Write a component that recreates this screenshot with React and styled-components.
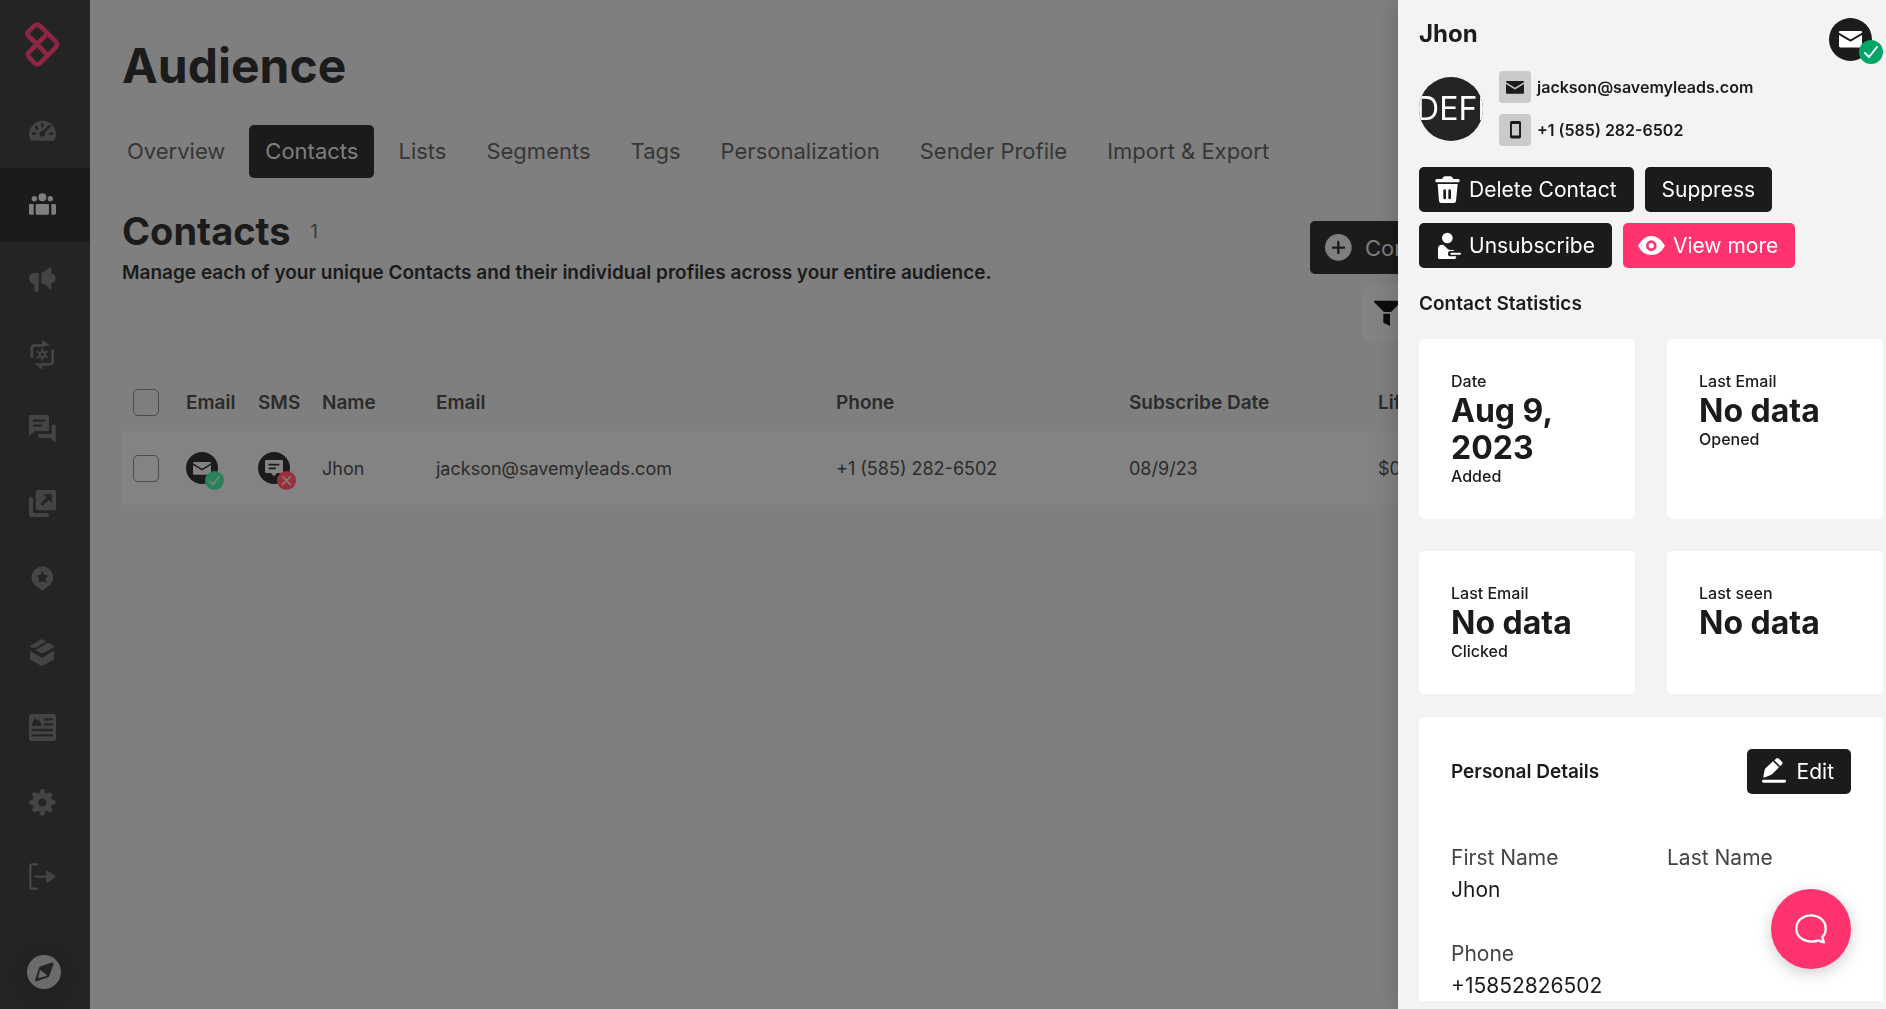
import styled, { createGlobalStyle } from "styled-components";

const GaugeIcon = () => (
  <svg viewBox="0 0 81 81">
    <path d="M7 71C0 64-1 55 1 45A40 40 0 0 1 80 45C82 55 81 64 74 71Z" />
    <g className="cut" strokeWidth="8">
      <path d="M12 50h6M63 50h6M21 30l3 4M40 23v4M40 50L61 27" />
      <circle className="cutFill" cx="40" cy="51" r="8" />
    </g>
  </svg>
);

const PeopleIcon = () => (
  <svg viewBox="0 0 81 81">
    <circle cx="40" cy="19" r="12" />
    <circle cx="16" cy="23" r="8" />
    <circle cx="64" cy="23" r="8" />
    <rect x="20" y="39" width="40" height="32" rx="4" />
    <path d="M4 39h10v32H4q-4 0-4-4V43q0-4 4-4zM67 39h10q4 0 4 4v24q0 4-4 4H67z" />
  </svg>
);

const MegaphoneIcon = () => (
  <svg viewBox="0 0 81 81">
    <path d="M14 21h15v53q0 3-3 3h-7q-3 0-3-3V54Q0 52 0 37Q1 22 14 21zM37 21Q52 16 62 4h5v19q13 2 13 14t-13 14v19h-5Q52 56 37 52z" />
  </svg>
);

const LoopIcon = () => (
  <svg viewBox="0 0 81 81">
    <path
      className="line"
      strokeWidth="8"
      d="M8 47V23q0-10 10-10h26M71 29v31q0 10-10 10H40"
    />
    <path d="M39-2q14 5 25 16H39zM16 67h24v19Q28 78 16 67z" />
    <g className="line" strokeWidth="6">
      <circle cx="40" cy="40" r="8" />
      <path d="M40 24v6M40 50v6M26 32l6 4M48 45l6 4M54 32l-6 4M32 45l-6 4" />
    </g>
  </svg>
);

const ChatsIcon = () => (
  <svg viewBox="0 0 81 81">
    <path d="M4 0h52q4 0 4 4v40q0 4-4 4H18L4 61q-4 2-4-3V4q0-4 4-4zM68 29h8q4 0 4 4v44q0 5-4 3L64 69H32q-4 0-4-4v-8h36q4 0 4-4z" />
    <path className="cut" strokeWidth="7" d="M15 17h30M15 32h21" />
  </svg>
);

const ShareIcon = () => (
  <svg viewBox="0 0 81 81">
    <rect x="20" width="61" height="61" rx="6" />
    <path
      className="line"
      strokeWidth="12"
      strokeLinecap="butt"
      d="M6 26v45q0 4 4 4h44"
    />
    <path className="cut" strokeWidth="9" d="M40 42L56 26" />
    <path className="cutFill" d="M44 13h24v25z" />
  </svg>
);

const PinIcon = () => (
  <svg viewBox="0 0 81 81">
    <path d="M40 4A33 33 0 0 1 51 68L43 75q-3 2-6 0L29 68A33 33 0 0 1 40 4z" />
    <path
      className="cutFill"
      d="M40 18l6 12 12 2-9 9 3 13-12-6-12 6 3-13-9-9 12-2z"
    />
  </svg>
);

const BoxIcon = () => (
  <svg viewBox="0 0 81 81">
    <path d="M3 21L34 2q4-2 8 0l9 6L17 28H14L4 24zM19 34L54 13q4-2 8 0l13 9v3L43 42q-4 2-7 0zM3 35L35 54q4 2 8 0L75 35v26L42 80q-3 2-6 0L3 61z" />
  </svg>
);

const NewsIcon = () => (
  <svg viewBox="0 0 81 81">
    <rect width="81" height="81" rx="7" />
    <path
      className="cutFill"
      d="M8 36q3-13 10-24 3 1 6 8l4-3q6 4 10 19z"
    />
    <path
      className="cut"
      strokeWidth="7"
      d="M47 16h22M47 31h22M11 48h58M11 64h58"
    />
  </svg>
);

const GearIcon = () => (
  <svg viewBox="0 0 81 81">
    <circle className="line" cx="40" cy="40" r="21" strokeWidth="17" />
    <path
      className="line"
      strokeWidth="16"
      d="M40 8v10M40 62v10M8 40h10M62 40h10M18 18l8 8M54 54l8 8M62 18l-8 8M26 54l-8 8"
    />
  </svg>
);

const ExitIcon = () => (
  <svg viewBox="0 0 81 81">
    <path
      className="line"
      strokeWidth="7"
      d="M24 4H10q-6 0-6 6v61q0 6 6 6h14M20 41h36"
    />
    <path d="M52 21l26 17q4 3 0 6L52 61z" />
  </svg>
);

const CompassIcon = () => (
  <svg viewBox="0 0 100 100">
    <circle cx="50" cy="50" r="50" />
    <path
      className="cutFill"
      d="M36 37q2-4 6-5l32-10q5-1 4 4L66 61q-1 4-5 5L28 77q-5 1-4-5z"
    />
    <path d="M38 45q1-1 2 0l18 14q1 2-1 3l-22 6q-2 0-2-2z" />
  </svg>
);

const LogoIcon = () => (
  <svg viewBox="0 0 105 134" fill="none" strokeWidth="14">
    <path d="M37 67L13 44Q3 35 12 26L27 12Q37 3 46 12L91 57Q101 67 91 77L47 121Q37 131 28 122L13 106Q4 97 14 88L67 35M37 67L67 98" />
  </svg>
);

const EnvelopeIcon = () => (
  <svg viewBox="0 0 70 50">
    <path d="M3 0h64q3 0 3 3v2L35 26 0 5V3q0-3 3-3zM0 12l35 21 35-21v34q0 4-4 4H4q-4 0-4-4z" />
  </svg>
);

const SmsIcon = () => (
  <svg viewBox="0 0 54 50">
    <path d="M3 0h48q3 0 3 3v33q0 3-3 3H36l-9 10-9-10H3q-3 0-3-3V3q0-3 3-3z" />
    <path className="cut" strokeWidth="5" d="M13 14h28M13 25h18" />
  </svg>
);

const PhoneIcon = () => (
  <svg viewBox="0 0 34 54">
    <path
      fillRule="evenodd"
      d="M5 0h24q5 0 5 5v44q0 5-5 5H5q-5 0-5-5V5q0-5 5-5zM6 9v36h22V9z"
    />
  </svg>
);

const CheckIcon = () => (
  <svg viewBox="0 0 24 24">
    <path className="line" strokeWidth="2" d="M6 13l4 4 8-10" />
  </svg>
);

const CrossIcon = () => (
  <svg viewBox="0 0 24 24">
    <path className="line" strokeWidth="2" d="M7 7l10 10M17 7L7 17" />
  </svg>
);

const TrashIcon = () => (
  <svg viewBox="0 0 81 81">
    <path d="M8 9h16l4-6q2-2 5-2h16q3 0 5 2l4 6h15q4 0 4 5t-4 5H8q-4 0-4-5t4-5z" />
    <path
      fillRule="evenodd"
      d="M11 24h60l-5 52q-1 5-6 5H21q-5 0-6-5zM32 40q-4 0-4 4v22q0 4 4 4t4-4V44q0-4-4-4zM47 40q-4 0-4 4v22q0 4 4 4t4-4V44q0-4-4-4z"
    />
  </svg>
);

const PersonIcon = () => (
  <svg viewBox="0 0 81 81">
    <circle cx="40" cy="18" r="16" />
    <path d="M12 50q0-13 16-12l14 14q5 3 13 1l7 4H49q-7 0-7 8t8 8h17l-3 8H16q-4 0-4-4z" />
    <path className="line" strokeWidth="6" d="M52 65h26" />
  </svg>
);

const EyeIcon = () => (
  <svg viewBox="0 0 81 81">
    <path
      fillRule="evenodd"
      d="M0 41Q16 12 40 12T81 41Q66 69 40 69T0 41zM40 25a16 16 0 1 0 0 32a16 16 0 1 0 0-32z"
    />
    <circle cx="40" cy="41" r="8" />
  </svg>
);

const PencilIcon = () => (
  <svg viewBox="0 0 81 81">
    <path d="M4 56L8 36q1-4 4-7L33 10l18 18-20 20q-3 3-7 4L6 59zM37 7l5-5q4-4 9 0l9 9q4 4 0 8l-5 6z" />
    <rect y="65" width="72" height="9" rx="4" />
  </svg>
);

const PlusCircleIcon = () => (
  <svg viewBox="0 0 81 81">
    <circle cx="40" cy="40" r="40" />
    <path className="cut" strokeWidth="7" d="M40 24v33M24 41h33" />
  </svg>
);

const FunnelIcon = () => (
  <svg viewBox="0 0 81 81">
    <path d="M0 2h81v4L51 36H30L0 6zM28 41h20v37L28 68z" />
  </svg>
);

const BubbleIcon = () => (
  <svg viewBox="0 0 97 90" fill="none" strokeWidth="7">
    <path
      strokeLinejoin="round"
      d="M48 4C72 4 93 20 93 44C93 56 87 66 83 69Q84 78 88 86Q78 85 72 80C42 90 4 78 4 44C4 20 25 4 48 4z"
    />
  </svg>
);

const navItems = [
  { label: "Dashboard", Icon: GaugeIcon },
  { label: "Audience", Icon: PeopleIcon, active: true },
  { label: "Campaigns", Icon: MegaphoneIcon },
  { label: "Automation", Icon: LoopIcon },
  { label: "Conversations", Icon: ChatsIcon },
  { label: "Pop-ups", Icon: ShareIcon },
  { label: "Reviews", Icon: PinIcon },
  { label: "Products", Icon: BoxIcon },
  { label: "Content", Icon: NewsIcon },
  { label: "Settings", Icon: GearIcon },
  { label: "Log out", Icon: ExitIcon },
];

const tabs = [
  "Overview",
  "Contacts",
  "Lists",
  "Segments",
  "Tags",
  "Personalization",
  "Sender Profile",
  "Import & Export",
];

const stats = [
  { top: "Date", value: "Aug 9, 2023", bottom: "Added" },
  { top: "Last Email", value: "No data", bottom: "Opened" },
  { top: "Last Email", value: "No data", bottom: "Clicked" },
  { top: "Last seen", value: "No data" },
];

const details = [
  { term: "First Name", value: "Jhon" },
  { term: "Last Name", value: "" },
  { term: "Phone", value: "+15852826502" },
];

const App = () => {
  return (
    <>
      <GlobalStyle />
      <Layout>
        <Sidebar>
          <Logo href="#home" aria-label="Home">
            <LogoIcon />
          </Logo>
          <NavList>
            {navItems.map(({ label, Icon, active }) => (
              <NavItem key={label} href="#" aria-label={label} $active={active}>
                <Icon />
              </NavItem>
            ))}
          </NavList>
          <CompassButton aria-label="Guide">
            <CompassIcon />
          </CompassButton>
        </Sidebar>

        <Main>
          <h1>Audience</h1>
          <Tabs>
            {tabs.map((tab) => (
              <Tab key={tab} href="#" $active={tab === "Contacts"}>
                {tab}
              </Tab>
            ))}
          </Tabs>

          <SectionHead>
            <div>
              <SectionTitle>
                <h2>Contacts</h2>
                <span>1</span>
              </SectionTitle>
              <p>
                Manage each of your unique Contacts and their individual
                profiles across your entire audience.
              </p>
            </div>
            <AddButton>
              <PlusCircleIcon />
              Contact
            </AddButton>
          </SectionHead>

          <Filters>
            <FilterButton aria-label="Filter">
              <FunnelIcon />
            </FilterButton>
          </Filters>

          <Table>
            <colgroup>
              <col className="check" />
              <col className="email" />
              <col className="sms" />
              <col className="name" />
              <col className="address" />
              <col className="phone" />
              <col className="date" />
              <col />
            </colgroup>
            <thead>
              <tr>
                <th>
                  <Checkbox aria-label="Select all" />
                </th>
                <th>Email</th>
                <th>SMS</th>
                <th>Name</th>
                <th>Email</th>
                <th>Phone</th>
                <th>Subscribe Date</th>
                <th>Lifetime</th>
              </tr>
            </thead>
            <tbody>
              <tr>
                <td>
                  <Checkbox aria-label="Select Jhon" />
                </td>
                <td>
                  <Channel>
                    <EnvelopeIcon />
                    <Badge $color="#2a8059">
                      <CheckIcon />
                    </Badge>
                  </Channel>
                </td>
                <td>
                  <Channel>
                    <SmsIcon />
                    <Badge $color="#99303a">
                      <CrossIcon />
                    </Badge>
                  </Channel>
                </td>
                <td>Jhon</td>
                <td>jackson@savemyleads.com</td>
                <td>+1 (585) 282-6502</td>
                <td>08/9/23</td>
                <td>$0.00</td>
              </tr>
            </tbody>
          </Table>
        </Main>
      </Layout>

      <Panel>
        <PanelBody>
          <PanelHead>
            <h3>Jhon</h3>
            <Channel $large>
              <EnvelopeIcon />
              <Badge $large $color="#00a567">
                <CheckIcon />
              </Badge>
            </Channel>
          </PanelHead>

          <Profile>
            <Avatar>DEFI</Avatar>
            <ContactList>
              <li>
                <Chip>
                  <EnvelopeIcon />
                </Chip>
                jackson@savemyleads.com
              </li>
              <li>
                <Chip $narrow>
                  <PhoneIcon />
                </Chip>
                +1 (585) 282-6502
              </li>
            </ContactList>
          </Profile>

          <Actions>
            <Button $icon>
              <TrashIcon />
              Delete Contact
            </Button>
            <Button>Suppress</Button>
            <Button $icon>
              <PersonIcon />
              Unsubscribe
            </Button>
            <Button $icon $pink>
              <EyeIcon />
              View more
            </Button>
          </Actions>

          <h4>Contact Statistics</h4>
          <StatGrid>
            {stats.map(({ top, value, bottom }) => (
              <StatCard key={top + bottom}>
                <span>{top}</span>
                <strong>{value}</strong>
                {bottom && <span>{bottom}</span>}
              </StatCard>
            ))}
          </StatGrid>

          <DetailsCard>
            <header>
              <h4>Personal Details</h4>
              <Button $icon>
                <PencilIcon />
                Edit
              </Button>
            </header>
            <dl>
              {details.map(({ term, value }) => (
                <div key={term}>
                  <dt>{term}</dt>
                  <dd>{value}</dd>
                </div>
              ))}
            </dl>
          </DetailsCard>
        </PanelBody>
      </Panel>

      <ChatButton aria-label="Open chat">
        <BubbleIcon />
      </ChatButton>
    </>
  );
};

const GlobalStyle = createGlobalStyle`
  * {
    box-sizing: border-box;
    margin: 0;
    padding: 0;
  }

  body {
    background-color: #7f7f7f;
    color: #1b1b1b;
    font-family: Inter, "Liberation Sans", sans-serif;
    overflow: hidden;
  }

  a {
    text-decoration: none;
  }

  button {
    border: none;
    font-family: inherit;
    cursor: pointer;
  }

  svg {
    display: block;
    flex-shrink: 0;
    fill: currentColor;
    overflow: visible;
  }

  svg .line,
  svg .cut {
    fill: none;
    stroke: currentColor;
    stroke-linecap: round;
    stroke-linejoin: round;
  }

  svg .cut {
    stroke: var(--cut);
  }

  svg .cutFill {
    fill: var(--cut);
    stroke: none;
  }
`;

const Layout = styled.div`
  display: flex;
  height: 100vh;
`;

const Sidebar = styled.aside`
  --cut: #242424;
  display: flex;
  flex-direction: column;
  flex-shrink: 0;
  width: 90px;
  background-color: #242424;
`;

const Logo = styled.a`
  height: 93px;
  padding: 22px 25px;

  & svg {
    width: 35px;
    height: 45px;
    fill: none;
    stroke: #8c2643;
  }
`;

const NavList = styled.nav`
  display: flex;
  flex-direction: column;
  height: 821px;
`;

const NavItem = styled.a`
  display: flex;
  flex: 1;
  align-items: center;
  padding-left: 29px;
  color: ${({ $active }) => ($active ? "#7f7f7f" : "#444444")};
  background-color: ${({ $active }) => ($active ? "#1b1b1b" : "transparent")};

  & svg {
    width: 27px;
    height: 27px;
  }
`;

const CompassButton = styled.button`
  width: 34px;
  height: 34px;
  margin: auto 0 20px 27px;
  border-radius: 50%;
  color: #6b6b6b;
  background-color: transparent;
  box-shadow: 0 4px 24px rgba(0, 0, 0, 0.2);
`;

const Main = styled.main`
  flex: 1;
  min-width: 0;
  padding: 36px 32px 0;

  & h1 {
    font-size: 48px;
    line-height: 60px;
    font-weight: 700;
  }
`;

const Tabs = styled.nav`
  display: flex;
  gap: 8px;
  margin: 29px 0 0 -11px;
`;

const Tab = styled.a`
  padding: 0 16px;
  border-radius: 5px;
  font-size: 22px;
  line-height: 53px;
  color: ${({ $active }) => ($active ? "#7f7f7f" : "#363636")};
  background-color: ${({ $active }) => ($active ? "#1b1b1b" : "transparent")};
`;

const SectionHead = styled.header`
  display: flex;
  justify-content: space-between;
  margin-top: 31px;

  & p {
    font-size: 19px;
    line-height: 24px;
    font-weight: 600;
  }
`;

const SectionTitle = styled.div`
  display: flex;
  align-items: center;
  gap: 20px;
  margin-bottom: 8px;

  & h2 {
    font-size: 38px;
    line-height: 44px;
    font-weight: 700;
  }

  & span {
    font-size: 18px;
    color: #363636;
  }
`;

const AddButton = styled.button`
  --cut: #1b1b1b;
  display: flex;
  align-items: center;
  gap: 13px;
  width: 280px;
  height: 53px;
  margin: 12px 264px 0 0;
  padding: 0 15px;
  border-radius: 5px;
  font-size: 22px;
  color: #7f7f7f;
  background-color: #1b1b1b;

  & svg {
    width: 27px;
    height: 27px;
  }
`;

const Filters = styled.div`
  display: flex;
  justify-content: flex-end;
`;

const FilterButton = styled.button`
  display: flex;
  align-items: center;
  width: 491px;
  height: 56px;
  padding-left: 11px;
  border-radius: 5px;
  color: #0c0c0c;
  background-color: #838383;

  & svg {
    width: 27px;
    height: 27px;
  }
`;

const Table = styled.table`
  width: 100%;
  margin-top: 32px;
  table-layout: fixed;
  border-collapse: collapse;
  text-align: left;
  font-size: 18px;
  white-space: nowrap;
  color: #2b2b2b;

  & th {
    height: 58px;
    font-size: 19px;
    font-weight: 600;
  }

  & td {
    height: 74px;
    background-color: #838383;
  }

  & th:first-child,
  & td:first-child {
    padding-left: 11px;
  }

  & .check {
    width: 64px;
  }

  & .email {
    width: 72px;
  }

  & .sms {
    width: 64px;
  }

  & .name {
    width: 114px;
  }

  & .address {
    width: 400px;
  }

  & .phone {
    width: 293px;
  }

  & .date {
    width: 249px;
  }
`;

const Checkbox = styled.input.attrs({ type: "checkbox" })`
  display: block;
  width: 26px;
  height: 27px;
  appearance: none;
  border: 1px solid #4c4c4c;
  border-radius: 5px;
`;

const Channel = styled.div`
  --cut: #1b1b1b;
  position: relative;
  display: flex;
  align-items: center;
  justify-content: center;
  width: ${({ $large }) => ($large ? "43px" : "32px")};
  height: ${({ $large }) => ($large ? "43px" : "32px")};
  border-radius: 50%;
  color: ${({ $large }) => ($large ? "#ffffff" : "#838383")};
  background-color: #1b1b1b;

  & > svg {
    width: ${({ $large }) => ($large ? "23px" : "18px")};
  }
`;

const Badge = styled.span`
  position: absolute;
  right: ${({ $large }) => ($large ? "-11px" : "-6px")};
  bottom: ${({ $large }) => ($large ? "-3px" : "-6px")};
  width: ${({ $large }) => ($large ? "24px" : "19px")};
  height: ${({ $large }) => ($large ? "24px" : "19px")};
  border-radius: 50%;
  background-color: ${({ $color }) => $color};
`;

const Panel = styled.aside`
  position: fixed;
  top: 0;
  right: 0;
  width: 488px;
  height: 100vh;
  padding: 0 3px 8px 21px;
  background-color: #f3f3f3;
  box-shadow: 0 0 24px rgba(0, 0, 0, 0.2);

  & h4 {
    font-size: 19px;
    line-height: 24px;
    font-weight: 600;
  }
`;

const PanelBody = styled.div`
  height: 100%;
  padding-top: 18px;
  overflow-y: auto;
  scrollbar-width: none;
`;

const PanelHead = styled.header`
  display: flex;
  justify-content: space-between;
  padding-right: 11px;

  & h3 {
    font-size: 24px;
    line-height: 32px;
    font-weight: 700;
  }
`;

const Profile = styled.div`
  display: flex;
  align-items: center;
  gap: 16px;
  margin-top: 10px;
`;

const Avatar = styled.div`
  display: flex;
  align-items: center;
  justify-content: center;
  width: 64px;
  height: 64px;
  border-radius: 50%;
  overflow: hidden;
  font-size: 32px;
  color: #ffffff;
  background-color: #242424;
`;

const ContactList = styled.ul`
  display: flex;
  flex-direction: column;
  gap: 11px;
  list-style: none;

  & li {
    display: flex;
    align-items: center;
    gap: 6px;
    font-size: 16px;
    font-weight: 600;
  }
`;

const Chip = styled.span`
  display: flex;
  align-items: center;
  justify-content: center;
  width: 32px;
  height: 32px;
  border-radius: 4px;
  background-color: #cacaca;

  & svg {
    width: ${({ $narrow }) => ($narrow ? "11px" : "18px")};
  }
`;

const Actions = styled.div`
  display: flex;
  flex-wrap: wrap;
  gap: 11px;
  margin: 21px 0 24px;
`;

const Button = styled.button`
  display: flex;
  align-items: center;
  gap: 8px;
  height: 45px;
  padding: ${({ $icon }) => ($icon ? "0 17px 0 15px" : "0 17px")};
  border-radius: 5px;
  font-size: 21px;
  color: #ffffff;
  background-color: ${({ $pink }) => ($pink ? "#ff336d" : "#1b1b1b")};

  & svg {
    width: 27px;
    height: 27px;
  }
`;

const StatGrid = styled.div`
  display: grid;
  grid-template-columns: 1fr 1fr;
  gap: 32px;
  margin: 23px 0;
`;

const StatCard = styled.div`
  display: flex;
  flex-direction: column;
  padding: 32px;
  border-radius: 5px;
  background-color: #ffffff;

  & span {
    font-size: 16px;
    line-height: 21px;
    font-weight: 500;
  }

  & strong {
    font-size: 32px;
    line-height: 37px;
    font-weight: 700;
  }
`;

const DetailsCard = styled.section`
  padding: 32px;
  border-radius: 5px;
  background-color: #ffffff;

  & header {
    display: flex;
    align-items: center;
    justify-content: space-between;
    margin-bottom: 48px;
  }

  & dl {
    display: grid;
    grid-template-columns: 1fr 1fr;
    gap: 32px;
    font-size: 21px;
    line-height: 32px;
  }

  & dt {
    color: #444444;
  }
`;

const ChatButton = styled.button`
  position: fixed;
  right: 35px;
  bottom: 40px;
  display: flex;
  align-items: center;
  justify-content: center;
  width: 80px;
  height: 80px;
  border-radius: 50%;
  color: #ffffff;
  background-color: #ff336d;
  box-shadow: 0 4px 16px rgba(0, 0, 0, 0.2);

  & svg {
    width: 32px;
    fill: none;
    stroke: currentColor;
  }
`;

export default App;
